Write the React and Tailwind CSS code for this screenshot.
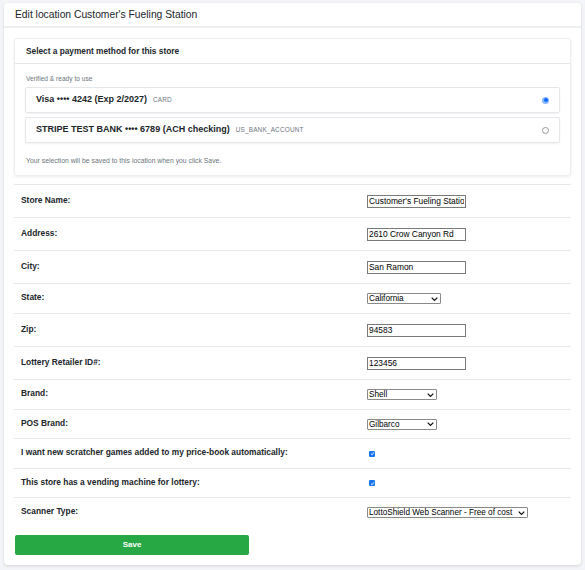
import { useState } from "react";

const font = { fontFamily: '"Liberation Sans", Arial, sans-serif' };

function Chevron() {
  return (
    <svg viewBox="0 0 10 6" className="absolute right-[3px] top-1/2 -translate-y-1/2 w-[7px] h-[5px]">
      <path d="M1 1 L5 5 L9 1" fill="none" stroke="#111" strokeWidth="1.8" />
    </svg>
  );
}

function TextField({ value }) {
  return (
    <input
      defaultValue={value}
      className="w-[99px] h-[13px] border border-[#7a7a7a] px-[1px] text-[8.4px] text-black outline-none bg-white"
      style={font}
    />
  );
}

function SelectField({ value, width }) {
  return (
    <div className={`relative ${width} h-[11px]`}>
      <div className="h-full w-full border border-[#8a8a8a] rounded-[1px] bg-white pl-[1px] text-[8.2px] leading-[9px] text-black whitespace-nowrap overflow-hidden">
        {value}
      </div>
      <Chevron />
    </div>
  );
}

function Check() {
  return (
    <span className="w-[6px] h-[6px] rounded-[1px] bg-[#1a73f0] flex items-center justify-center ml-[2px]">
      <svg viewBox="0 0 10 10" className="w-[5px] h-[5px]">
        <path d="M2 5.5 L4.2 7.5 L8 2.5" fill="none" stroke="#fff" strokeWidth="1.8" />
      </svg>
    </span>
  );
}

function Row({ label, h, children }) {
  return (
    <div className={`grid grid-cols-[353px_1fr] items-center border-t border-[#e6e8eb] ${h}`}>
      <div className="pl-[7px] -mt-[2px] text-[8.4px] font-bold text-[#212529]">{label}</div>
      <div className="flex items-center">{children}</div>
    </div>
  );
}

function PayOption({ title, kind, selected, onClick }) {
  return (
    <div
      onClick={onClick}
      className="h-[26px] flex items-center justify-between border border-[#e5e7eb] rounded-[2px] shadow-[0_1px_2px_rgba(0,0,0,0.06)] px-[10px] cursor-pointer"
    >
      <div className="flex items-baseline gap-[6px]">
        <span className="text-[9px] font-bold text-[#212529]">{title}</span>
        <span className="text-[6.4px] text-[#6c757d] tracking-[0.2px]">{kind}</span>
      </div>
      {selected ? (
        <span className="w-[7px] h-[7px] rounded-full bg-[#8ab8ff] flex items-center justify-center">
          <span className="w-[4px] h-[4px] rounded-full bg-[#1466ff]"></span>
        </span>
      ) : (
        <span className="w-[7px] h-[7px] rounded-full border border-[#9a9a9a] bg-white"></span>
      )}
    </div>
  );
}

export default function App() {
  const [method, setMethod] = useState("card");

  return (
    <div className="bg-[#f3f4f7] px-[4px] pt-[3px] pb-[5px] h-[570px]" style={font}>
      <div className="bg-white rounded-[4px] shadow-[0_1px_3px_rgba(0,0,0,0.12)] h-[562px]">
        {/* header */}
        <div className="h-[25px] flex items-center px-[11px] border-b-2 border-[#eceef1]">
          <h1 className="text-[10.3px] text-[#212529]">Edit location Customer's Fueling Station</h1>
        </div>

        <div className="px-[10px] pt-[10px] pb-[10px]">
          {/* payment card */}
          <div className="border border-[#eceef0] rounded-[3px] shadow-[0_1px_3px_rgba(0,0,0,0.08)]">
            <div className="h-[25px] flex items-center px-[11px] border-b border-[#e5e7eb]">
              <span className="text-[8.3px] font-bold text-[#212529]">Select a payment method for this store</span>
            </div>
            <div className="px-[10px] pt-[11px] pb-[10px]">
              <p className="text-[6.6px] leading-[8px] text-[#6c757d] mb-[4px] pl-[1px]">Verified &amp; ready to use</p>
              <div className="flex flex-col gap-[4px]">
                <PayOption
                  title="Visa •••• 4242 (Exp 2/2027)"
                  kind="CARD"
                  selected={method === "card"}
                  onClick={() => setMethod("card")}
                />
                <PayOption
                  title="STRIPE TEST BANK •••• 6789 (ACH checking)"
                  kind="US_BANK_ACCOUNT"
                  selected={method === "bank"}
                  onClick={() => setMethod("bank")}
                />
              </div>
              <p className="text-[6.85px] leading-[8px] text-[#6c757d] mt-[14px] pl-[1px]">
                Your selection will be saved to this location when you click Save.
              </p>
            </div>
          </div>

          {/* form rows */}
          <div className="mt-[8px]">
            <Row label="Store Name:" h="h-[33px]"><TextField value="Customer's Fueling Station" /></Row>
            <Row label="Address:" h="h-[33px]"><TextField value="2610 Crow Canyon Rd" /></Row>
            <Row label="City:" h="h-[33px]"><TextField value="San Ramon" /></Row>
            <Row label="State:" h="h-[30px]"><SelectField value="California" width="w-[74px]" /></Row>
            <Row label="Zip:" h="h-[33px]"><TextField value="94583" /></Row>
            <Row label="Lottery Retailer ID#:" h="h-[33px]"><TextField value="123456" /></Row>
            <Row label="Brand:" h="h-[30px]"><SelectField value="Shell" width="w-[70px]" /></Row>
            <Row label="POS Brand:" h="h-[29px]"><SelectField value="Gilbarco" width="w-[70px]" /></Row>
            <Row label="I want new scratcher games added to my price-book automatically:" h="h-[30px]"><Check /></Row>
            <Row label="This store has a vending machine for lottery:" h="h-[29px]"><Check /></Row>
            <Row label="Scanner Type:" h="h-[30px]">
              <SelectField value="LottoShield Web Scanner - Free of cost" width="w-[161px]" />
            </Row>
          </div>

          <button className="mt-[8px] ml-[1px] w-[234px] h-[20px] rounded-[2px] bg-[#28a745] text-white text-[8px] font-bold">
            Save
          </button>
        </div>
      </div>
    </div>
  );
}
